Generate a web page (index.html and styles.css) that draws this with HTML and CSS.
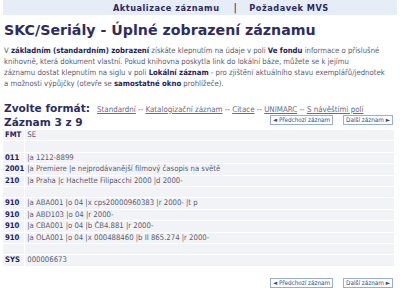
FILE: index.html
```
<!DOCTYPE html>
<html lang="cs">
<head>
<meta charset="utf-8">
<link rel="stylesheet" href="styles.css">
</head>
<body>
<div class="topbar">
  <span class="toplink">Aktualizace záznamu</span>
  <span class="sep">|</span>
  <span class="toplink">Požadavek MVS</span>
</div>
<h1 class="title">SKC/Seriály - Úplné zobrazení záznamu</h1>
<p class="intro">V <b>základním (standardním) zobrazení</b> získáte klepnutím na údaje v poli <b>Ve fondu</b> informace o příslušné<br>knihovně, která dokument vlastní. Pokud knihovna poskytla link do lokální báze, můžete se k jejímu<br>záznamu dostat klepnutím na siglu v poli <b>Lokální záznam</b> - pro zjištění aktuálního stavu exemplářů/jednotek<br>a možnosti výpůjčky (otevře se <b>samostatné okno</b> prohlížeče).</p>
<div class="formats">
  <span class="flabel">Zvolte formát:</span>
  <span class="flinks"><a href="#">Standardní</a> -- <a href="#">Katalogizační záznam</a> -- <a href="#">Citace</a> -- <a href="#">UNIMARC</a> -- <a href="#">S návěštími polí</a></span>
</div>
<div class="recbar">
  <span class="rechead">Záznam 3 z 9</span>
  <span class="navbtns"><span class="btn">◄ Předchozí záznam</span><span class="btn">Další záznam ►</span></span>
</div>
<table class="rec">
  <tr><td class="tag">FMT</td><td>SE</td></tr>
  <tr><td class="tag"></td><td></td></tr>
  <tr><td class="tag">011</td><td>|a 1212-8899</td></tr>
  <tr><td class="tag">2001</td><td>|a Premiere |e nejprodávanější filmový časopis na světě</td></tr>
  <tr><td class="tag">210</td><td>|a Praha |c Hachette Filipacchi 2000 |d 2000-</td></tr>
  <tr><td class="tag"></td><td></td></tr>
  <tr><td class="tag">910</td><td>|a ABA001 |o 04 |x cps20000960383 |r 2000- |t p</td></tr>
  <tr><td class="tag">910</td><td>|a ABD103 |o 04 |r 2000-</td></tr>
  <tr><td class="tag">910</td><td>|a CBA001 |o 04 |b ČB4.881 |r 2000-</td></tr>
  <tr><td class="tag">910</td><td>|a OLA001 |o 04 |x 000488460 |b II 865.274 |r 2000-</td></tr>
  <tr><td class="tag"></td><td></td></tr>
  <tr><td class="tag">SYS</td><td>000006673</td></tr>
</table>
<div class="bottomnav">
  <span class="btn">◄ Předchozí záznam</span><span class="btn">Další záznam ►</span>
</div>
</body>
</html>
```
FILE: styles.css
```
html, body { margin: 0; padding: 0; background: #fff; }
body {
  font-family: "DejaVu Sans Condensed", "Liberation Sans", sans-serif;
  color: #5a5a6e;
  width: 400px;
  height: 292px;
  overflow: hidden;
}
.topbar {
  margin: 0 3px;
  height: 15px;
  background: #e6edf7;
  display: flex;
  align-items: center;
  padding-left: 110px;
  font-family: "DejaVu Sans", sans-serif;
  font-size: 8.2px;
  letter-spacing: 0.5px;
  font-weight: bold;
  color: #2b2b5c;
}
.sep { margin: 0 12px 0 14px; font-weight: normal; font-size: 10px; color: #2b2b5c; }
.title {
  font-family: "DejaVu Sans", sans-serif;
  margin: 7px 0 0 4px;
  font-size: 14.2px;
  line-height: 16px;
  font-weight: bold;
  color: #2d2d5e;
}
.intro {
  margin: 7px 0 0 4px;
  width: 396px;
  font-size: 7.7px;
  line-height: 11px;
  color: #5c5c70;
  white-space: nowrap;
}
.intro b { color: #22225a; }
.formats {
  margin: 13px 0 0 4px;
  display: flex;
  align-items: baseline;
  white-space: nowrap;
}
.flinks { font-size: 7.9px; color: #5c5c70; }
.formats a { color: #6a6a80; text-decoration: underline; }
.flabel {
  font-family: "DejaVu Sans", sans-serif;
  font-size: 10.6px; font-weight: bold; color: #2d2d5e; margin-right: 7px;
}
.recbar {
  margin: 1px 7px 0 4px;
  height: 14px;
  display: flex;
  justify-content: space-between;
  align-items: flex-start;
}
.rechead {
  font-family: "DejaVu Sans", sans-serif;
  font-size: 10.6px; font-weight: bold; color: #2d2d5e; line-height: 14px;
}
.navbtns { display: flex; gap: 10px; margin-top: 0; }
.btn {
  display: inline-block;
  font-size: 6.3px;
  line-height: 8px;
  padding: 0 2px;
  border: 1px solid #9aaed0;
  color: #2b4a8a;
  background: #fff;
  white-space: nowrap;
}
.rec {
  margin: 0 0 0 3px;
  width: 391px;
  border-collapse: separate;
  border-spacing: 0 1px;
  font-size: 7.7px;
}
.rec td {
  background: #f2f3f6;
  height: 10.4px;
  line-height: 10.4px;
  padding: 0 0 0 2px;
  color: #5c5c70;
  white-space: nowrap;
}
.rec td.tag {
  width: 19px;
  font-weight: bold;
  color: #22225a;
  border-right: 1px solid #fff;
}
.bottomnav {
  margin: 11px 7px 0 0;
  display: flex;
  justify-content: flex-end;
  gap: 10px;
}
```
